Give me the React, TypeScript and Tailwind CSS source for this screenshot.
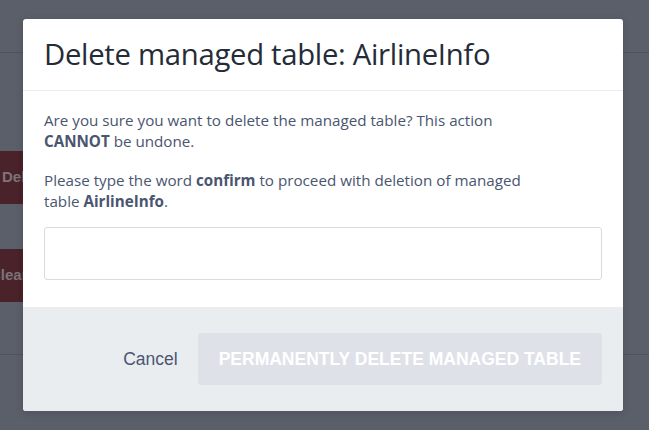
import React from "react";

function PageBehind() {
  return (
    <div className="flex h-full flex-col bg-[#5b5f6a]">
      <div className="h-[53px] border-b border-[#4f535d]" />
      <div className="mt-[98px] flex h-[53px] w-[140px] items-center bg-[#4a2229] pl-[2px] text-[15px] font-bold text-[#7d7479] [font-family:'Liberation_Sans',sans-serif]">
        <span>Delete</span>
      </div>
      <div className="mt-[45px] flex h-[53px] w-[140px] items-center bg-[#4a2229] text-[15px] font-bold text-[#7d7479] [font-family:'Liberation_Sans',sans-serif]">
        <span className="ml-[-10px]">Clear</span>
      </div>
      <div className="mt-[52px] border-b border-[#4f535d]" />
    </div>
  );
}

export default function App() {
  return (
    <div className="relative h-[430px] w-full overflow-hidden">
      <PageBehind />
      <div className="absolute left-[23px] top-[19px] flex h-[392px] w-[600px] flex-col overflow-hidden rounded-[3px] bg-white shadow-[0_2px_8px_rgba(0,0,0,0.15)] [font-family:'Open_Sans',sans-serif]">
        <div className="flex h-[72px] items-center border-b border-[#e9ecf1] px-[21px]">
          <h2 className="text-[29.3px] font-normal tracking-[-0.3px] text-[#242c38]">
            Delete managed table: AirlineInfo
          </h2>
        </div>
        <div className="flex flex-col px-[21px] pt-[19px] pb-[27px] text-[15.2px] leading-[21px] text-[#4a5570]">
          <div className="max-w-[510px]">
            <p>
              Are you sure you want to delete the managed table? This action{" "}
              <b>CANNOT</b> be undone.
            </p>
            <p className="mt-[18px]">
              Please type the word <b>confirm</b> to proceed with deletion of managed table{" "}
              <b>AirlineInfo</b>.
            </p>
          </div>
          <input
            type="text"
            className="mt-[15px] h-[53px] w-full rounded-[3px] border border-[#d6dbe4] px-3 outline-none"
          />
        </div>
        <div className="flex flex-1 items-center justify-end gap-[20px] bg-[#eaedf0] px-[21px] [font-family:'Liberation_Sans',sans-serif]">
          <button className="text-[17.5px] text-[#4a5570]">Cancel</button>
          <button
            disabled
            className="h-[52px] rounded-[3px] bg-[#dee2e8] px-[21px] text-[17.5px] font-bold uppercase text-white"
          >
            Permanently delete managed table
          </button>
        </div>
      </div>
    </div>
  );
}
